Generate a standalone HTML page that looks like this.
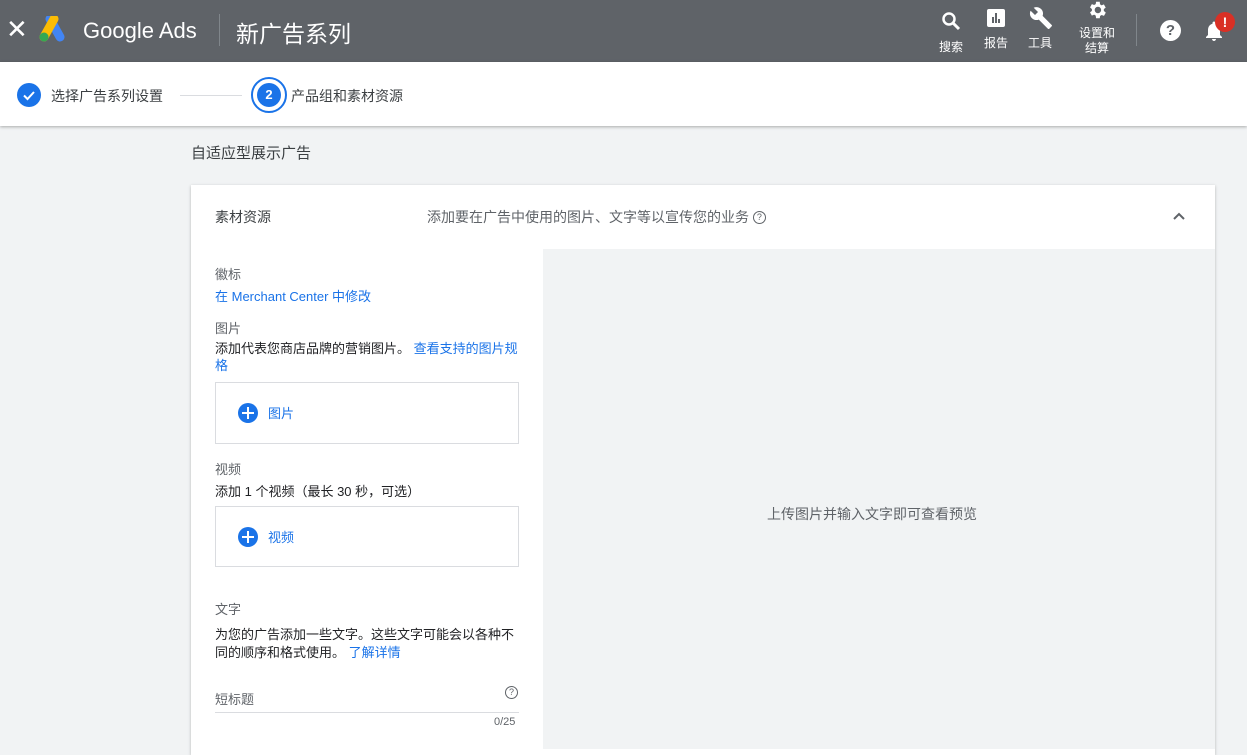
<!DOCTYPE html>
<html><head><meta charset="utf-8"><style>
*{margin:0;padding:0;box-sizing:border-box}
body{width:1247px;height:749px;overflow:hidden;background:#f1f3f4;font-family:"Liberation Sans","Noto Sans CJK SC",sans-serif;color:#202124;position:relative}
.a{position:absolute}
.hdr{left:0;top:0;width:1247px;height:62px;background:#5f6368}
.st{left:0;top:62px;width:1247px;height:64px;background:#fff;box-shadow:0 1px 3px rgba(0,0,0,.3)}
.w{color:#fff}
.t13{font-size:13px}
.t14{font-size:14px}
.lnk{color:#1a73e8}
.g{color:#5f6368}
.box{border:1px solid #dadce0;background:#fff}
.plus{width:20px;height:20px;border-radius:50%;background:#1a73e8}
.plus:before{content:"";position:absolute;left:4px;top:9px;width:12px;height:2.4px;background:#fff}
.plus:after{content:"";position:absolute;left:8.8px;top:4px;width:2.4px;height:12px;background:#fff}
</style></head><body>
<div class="a hdr"></div>
<div class="a w" style="left:6px;top:14px;font-size:26px;line-height:30px">✕</div>
<svg class="a" style="left:38px;top:16px" width="32" height="28" viewBox="0 0 32 28"><path d="M12 3 L22 21" stroke="#4285f4" stroke-width="9" stroke-linecap="round"/><path d="M16 3 L6 21" stroke="#fbbc04" stroke-width="9" stroke-linecap="round"/><circle cx="6" cy="21" r="4.5" fill="#34a853"/></svg>
<div class="a w" style="left:83px;top:18px;font-size:22px">Google Ads</div>
<div class="a" style="left:219px;top:14px;width:1px;height:32px;background:#80868b"></div>
<div class="a w" style="left:236px;top:15px;font-size:23px">新广告系列</div>
<svg class="a" style="left:941px;top:11px" width="20" height="20" viewBox="0 0 20 20"><circle cx="8" cy="8" r="5.5" stroke="#fff" stroke-width="2.5" fill="none"/><path d="M12 12l6 6" stroke="#fff" stroke-width="3"/></svg>
<div class="a w" style="left:939px;top:38px;font-size:12px">搜索</div>
<svg class="a" style="left:986px;top:8px" width="20" height="20"><rect x="1" y="1" width="18" height="18" rx="2" fill="#fff"/><rect x="6" y="9" width="2" height="6" fill="#5f6368"/><rect x="9" y="5" width="2" height="10" fill="#5f6368"/><rect x="12" y="11" width="2" height="4" fill="#5f6368"/></svg>
<div class="a w" style="left:984px;top:34px;font-size:12px">报告</div>
<svg class="a" style="left:1029px;top:6px" width="24" height="24" viewBox="0 0 24 24"><path fill="#fff" d="M22.7 19l-9.1-9.1c.9-2.3.4-5-1.5-6.9-2-2-5-2.4-7.4-1.3L9 6 6 9 1.6 4.7C.4 7.1.9 10.1 2.9 12.1c1.9 1.9 4.6 2.4 6.9 1.5l9.1 9.1c.4.4 1 .4 1.4 0l2.3-2.3c.5-.4.5-1.1.1-1.4z"/></svg>
<div class="a w" style="left:1028px;top:34px;font-size:12px">工具</div>
<svg class="a" style="left:1086px;top:0px" width="22" height="20" viewBox="0 2 24 20"><path fill="#fff" d="M19.4 13c0-.3.1-.6.1-1s0-.7-.1-1l2.1-1.6-2-3.5-2.5 1c-.5-.4-1.1-.7-1.7-1L15 3h-4l-.4 2.6c-.6.3-1.2.6-1.7 1l-2.5-1-2 3.5L6.5 11c0 .3-.1.6-.1 1s0 .7.1 1l-2.1 1.6 2 3.5 2.5-1c.5.4 1.1.7 1.7 1L11 21h4l.4-2.6c.6-.3 1.2-.6 1.7-1l2.5 1 2-3.5L19.4 13zM13 15.5c-1.9 0-3.5-1.6-3.5-3.5s1.6-3.5 3.5-3.5 3.5 1.6 3.5 3.5-1.6 3.5-3.5 3.5z"/></svg>
<div class="a w" style="left:1078px;top:26px;font-size:12px;line-height:15px;text-align:center;width:38px">设置和<br>结算</div>
<div class="a" style="left:1136px;top:14px;width:1px;height:32px;background:#80868b"></div>
<div class="a" style="left:1160px;top:20px;width:21px;height:21px;border-radius:50%;background:#fff;color:#5f6368;font-weight:bold;font-size:15px;text-align:center;line-height:21px">?</div>
<svg class="a" style="left:1204px;top:20px" width="20" height="22" viewBox="0 0 20 22"><path fill="#fff" d="M10 21c1.1 0 2-.9 2-2H8c0 1.1.9 2 2 2zm6-6V10c0-3-1.6-5.6-4.5-6.3V3c0-.8-.7-1.5-1.5-1.5S8.5 2.2 8.5 3v.7C5.6 4.4 4 7 4 10v5l-2 2v1h16v-1l-2-2z"/></svg>
<div class="a w" style="left:1215px;top:12px;width:20px;height:20px;border-radius:50%;background:#d93025;font-size:14px;font-weight:bold;text-align:center;line-height:20px">!</div>

<div class="a st"></div>
<div class="a" style="left:17px;top:83px;width:24px;height:24px;border-radius:50%;background:#1a73e8"></div>
<svg class="a" style="left:17px;top:83px" width="24" height="24"><path d="M7 12.5l3.5 3.5 6.5-7" stroke="#fff" stroke-width="2" fill="none"/></svg>
<div class="a t14" style="left:51px;top:86px;color:#3c4043">选择广告系列设置</div>
<div class="a" style="left:180px;top:95px;width:62px;height:1px;background:#dadce0"></div>
<div class="a" style="left:251px;top:77px;width:36px;height:36px;border-radius:50%;border:2px solid #1a73e8"></div>
<div class="a" style="left:257px;top:83px;width:24px;height:24px;border-radius:50%;background:#1a73e8;color:#fff;font-size:13px;font-weight:bold;text-align:center;line-height:24px">2</div>
<div class="a t14" style="left:291px;top:86px;color:#3c4043">产品组和素材资源</div>

<div class="a" style="left:191px;top:142px;font-size:15px;color:#3c4043">自适应型展示广告</div>
<div class="a" style="left:191px;top:185px;width:1024px;height:570px;background:#fff;box-shadow:0 1px 3px rgba(0,0,0,.25)"></div>
<div class="a t14" style="left:215px;top:207px;color:#3c4043">素材资源</div>
<div class="a t14 g" style="left:427px;top:207px">添加要在广告中使用的图片、文字等以宣传您的业务 <span style="display:inline-block;width:13px;height:13px;border:1.5px solid #5f6368;border-radius:50%;font-size:9px;line-height:10px;text-align:center;vertical-align:2px">?</span></div>
<svg class="a" style="left:1172px;top:211px" width="14" height="10"><path d="M2 8l5-5 5 5" stroke="#5f6368" stroke-width="2" fill="none"/></svg>
<div class="a" style="left:543px;top:249px;width:672px;height:500px;background:#f1f3f4"></div>
<div class="a t14 g" style="left:767px;top:504px">上传图片并输入文字即可查看预览</div>

<div class="a t13 g" style="left:215px;top:264px">徽标</div>
<div class="a t13 lnk" style="left:215px;top:286px">在 Merchant Center 中修改</div>
<div class="a t13 g" style="left:215px;top:318px">图片</div>
<div class="a t13" style="left:215px;top:340px;width:310px;line-height:17px">添加代表您商店品牌的营销图片。 <span class="lnk">查看支持的图片规格</span></div>
<div class="a box" style="left:215px;top:382px;width:304px;height:62px"></div>
<div class="a plus" style="left:238px;top:403px"></div>
<div class="a t13 lnk" style="left:268px;top:403px">图片</div>
<div class="a t13 g" style="left:215px;top:459px">视频</div>
<div class="a t13" style="left:215px;top:481px">添加 1 个视频（最长 30 秒，可选）</div>
<div class="a box" style="left:215px;top:506px;width:304px;height:61px"></div>
<div class="a plus" style="left:238px;top:527px"></div>
<div class="a t13 lnk" style="left:268px;top:527px">视频</div>
<div class="a t13 g" style="left:215px;top:599px">文字</div>
<div class="a t13" style="left:215px;top:626px;width:310px;line-height:18px">为您的广告添加一些文字。这些文字可能会以各种不同的顺序和格式使用。 <span class="lnk">了解详情</span></div>
<div class="a t13 g" style="left:215px;top:689px">短标题</div>
<div class="a" style="left:505px;top:686px;width:13px;height:13px;border:1.5px solid #5f6368;border-radius:50%;font-size:9px;line-height:10px;text-align:center;color:#5f6368">?</div>
<div class="a" style="left:215px;top:712px;width:304px;height:1px;background:#dadce0"></div>
<div class="a g" style="left:494px;top:716px;font-size:11px">0/25</div>
</body></html>
